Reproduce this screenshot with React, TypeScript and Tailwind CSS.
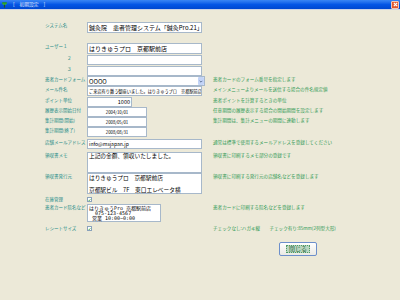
import React from 'react'

/* 初期設定ウィンドウ (XP 風) — 400x300 */

const JP = "font-['Noto_Sans_CJK_JP','Noto_Sans',sans-serif]"

const Row = ({
  label,
  desc,
  className = '',
  center = false,
  indent = false,
  children,
}: {
  label?: string
  desc?: string
  className?: string
  center?: boolean
  indent?: boolean
  children?: React.ReactNode
}) => (
  <div className={`flex ${center ? 'items-center' : 'items-start'} ${className}`}>
    <div
      className={`w-[42px] shrink-0 whitespace-nowrap text-[4.5px] text-[#1b8a86] ${
        center ? 'leading-[5px]' : 'leading-[7px]'
      } ${indent ? 'pl-[22px]' : ''}`}
    >
      {label}
    </div>
    <div className="w-[126px] shrink-0">{children}</div>
    <div
      className={`whitespace-nowrap text-[4.6px] text-[#2f9a55] ${
        center ? 'leading-[5px]' : 'leading-[6px]'
      }`}
    >
      {desc}
    </div>
  </div>
)

const Box = ({
  className = '',
  children,
}: {
  className?: string
  children?: React.ReactNode
}) => (
  <div
    className={`flex items-center overflow-hidden whitespace-nowrap border border-[#a7b8ca] bg-white px-[1px] text-black ${className}`}
  >
    {children}
  </div>
)

const Check = () => (
  <div className="flex h-[5px] w-[5px] items-center justify-center border border-[#8aa2bb] bg-white">
    <svg viewBox="0 0 6 6" className="h-[4px] w-[4px]">
      <path d="M1 3 L2.5 4.5 L5 1.2" fill="none" stroke="#21a121" strokeWidth="1.3" />
    </svg>
  </div>
)

export default function App() {
  return (
    <div className={`flex h-[300px] w-[400px] flex-col overflow-hidden bg-[#ECE9D8] ${JP}`}>
      {/* タイトルバー ------------------------------------------------ */}
      <div className="flex h-[10px] shrink-0 items-center border-b border-[#c9d3e6] bg-gradient-to-b from-[#3a86f4] via-[#0456e6] to-[#0047cf]">
        <svg viewBox="0 0 8 8" className="ml-[1px] h-[6px] w-[7px]">
          <path d="M0.5 1 L7.5 1 L6 3.5 L2 3.5 Z" fill="#3fbf2f" />
          <path d="M1 0.5 L7 0.5 L7 2 L1 2 Z" fill="#1e8c1e" />
          <rect x="3.2" y="3.5" width="1.6" height="4" fill="#2a5a1a" />
        </svg>
        <span className="ml-[5px] text-[4.8px] leading-none text-[#e6eeff]">[　初期設定　]</span>
        <div className="ml-auto mr-[1px] flex h-[8px] w-[8px] items-center justify-center rounded-[1px] border border-[#f3c6b4] bg-[#e2572f]">
          <svg viewBox="0 0 6 6" className="h-[5px] w-[5px]">
            <path d="M1 1 L5 5 M5 1 L1 5" stroke="#fff" strokeWidth="1.4" />
          </svg>
        </div>
      </div>

      {/* フォーム ------------------------------------------------------ */}
      <div className="flex flex-col pl-[45px] pt-[12px]">
        <Row label="システム名">
          <Box className="h-[11px] w-[115px] text-[6px]">鍼灸院　患者管理システム「鍼灸Pro.21」</Box>
        </Row>

        <Row label="ユーザー１" className="mt-[10px]">
          <Box className="h-[11px] w-[115px] text-[6px]">はりきゅうプロ　京都駅前店</Box>
        </Row>
        <Row label="２" indent className="mt-[1px]">
          <Box className="h-[10px] w-[115px]" />
        </Row>
        <Row label="３" indent className="mt-[1px]">
          <Box className="h-[10px] w-[115px]" />
        </Row>

        <Row label="患者カードフォーム" desc="患者カードのフォーム番号を指定します">
          <Box className="h-[10px] w-[118px] pr-0 text-[6px]">
            <span className="flex-1">OOOO</span>
            <span className="flex h-[8px] w-[6px] items-center justify-center rounded-[1px] bg-[#c3d4f7]">
              <svg viewBox="0 0 6 4" className="h-[3px] w-[4px]">
                <path d="M1 1 L3 3 L5 1" fill="none" stroke="#4d6185" strokeWidth="1.2" />
              </svg>
            </span>
          </Box>
        </Row>

        <Row label="メール件名" desc="メインメニューよりメールを送信する場合の件名規定値">
          <Box className="h-[10px] w-[115px] text-[4.2px]">
            ご来店有り難う御座いました。はりきゅうプロ　京都駅前店
          </Box>
        </Row>

        <Row label="ポイント単位" desc="患者ポイントを計算するときの単位" className="mt-[1px]">
          <Box className="h-[10px] w-[45px] justify-end text-[5.5px]">1000</Box>
        </Row>
        <Row label="履歴表示開始日付" desc="任意期間の履歴表示する場合の開始期間を設定します">
          <Box className="h-[10px] w-[60px] justify-center text-[4.3px]">2004/10/01</Box>
        </Row>
        <Row label="集計期間(開始)" desc="集計期間は、集計メニューの期間に連動します">
          <Box className="h-[10px] w-[60px] justify-center text-[4.3px]">2008/05/01</Box>
        </Row>
        <Row label="集計期間(終了)">
          <Box className="h-[10px] w-[60px] justify-center text-[4.3px]">2008/08/31</Box>
        </Row>

        <Row
          label="店舗メールアドレス"
          desc="通常は標準で使用するメールアドレスを登録してください"
          className="mt-[2px]"
        >
          <Box className="h-[10px] w-[115px] text-[5px]">info@msjapan.jp</Box>
        </Row>

        <Row label="領収書メモ" desc="領収書に印刷するメモ部分の登録です" className="mt-[3px]">
          <div className="h-[21px] w-[115px] border border-[#a7b8ca] bg-white px-[1px] text-[5.7px] leading-[5px] text-black">
            上記の金額、領収いたしました。
          </div>
        </Row>
        <Row label="領収書発行元" desc="領収書に印刷する発行元の店舗名などを登録します">
          <div className="flex h-[21px] w-[115px] flex-col whitespace-nowrap border border-[#a7b8ca] bg-white px-[1px] text-[5.7px] leading-[7px] text-black">
            <span>はりきゅうプロ　京都駅前店</span>
            <span className="mt-[5px]">京都駅ビル　7F　東口エレベータ横</span>
          </div>
        </Row>

        <Row label="在庫管理" center className="mt-[3px] h-[5px]">
          <Check />
        </Row>

        <Row label="患者カード院名など" desc="患者カードに印刷する院名などを登録します" className="mt-[2px]">
          <div className="flex h-[18px] w-[74px] flex-col whitespace-pre border border-[#a7b8ca] bg-white px-[1px] pt-[0.5px] font-['DejaVu_Sans_Mono','Noto_Sans_CJK_JP',monospace] text-[5px] leading-[5.2px] text-black">
            <span>はりきゅうPro 京都駅前店</span>
            <span>  075-123-4567</span>
            <span> 営業 10:00~0:00</span>
          </div>
        </Row>

        <Row
          label="レシートサイズ"
          desc="チェックなし:ハガキ縦　　チェック有り:85mm(2列型大形)"
          center
          className="mt-[4px] h-[5px]"
        >
          <Check />
        </Row>

        {/* 閉じる ---------------------------------------------------- */}
        <div className="mt-[11px] flex">
          <button className="ml-[234px] flex h-[14px] w-[38px] items-center justify-center rounded-[2px] border border-[#6c8fcb] bg-gradient-to-b from-white to-[#ebeae4]">
            <span className="border border-dotted border-[#4f9a66] bg-[#b9d6bf] px-[2px] text-[6px] leading-[6px] text-[#2d6a43]">
              閉じる
            </span>
          </button>
        </div>
      </div>
    </div>
  )
}
